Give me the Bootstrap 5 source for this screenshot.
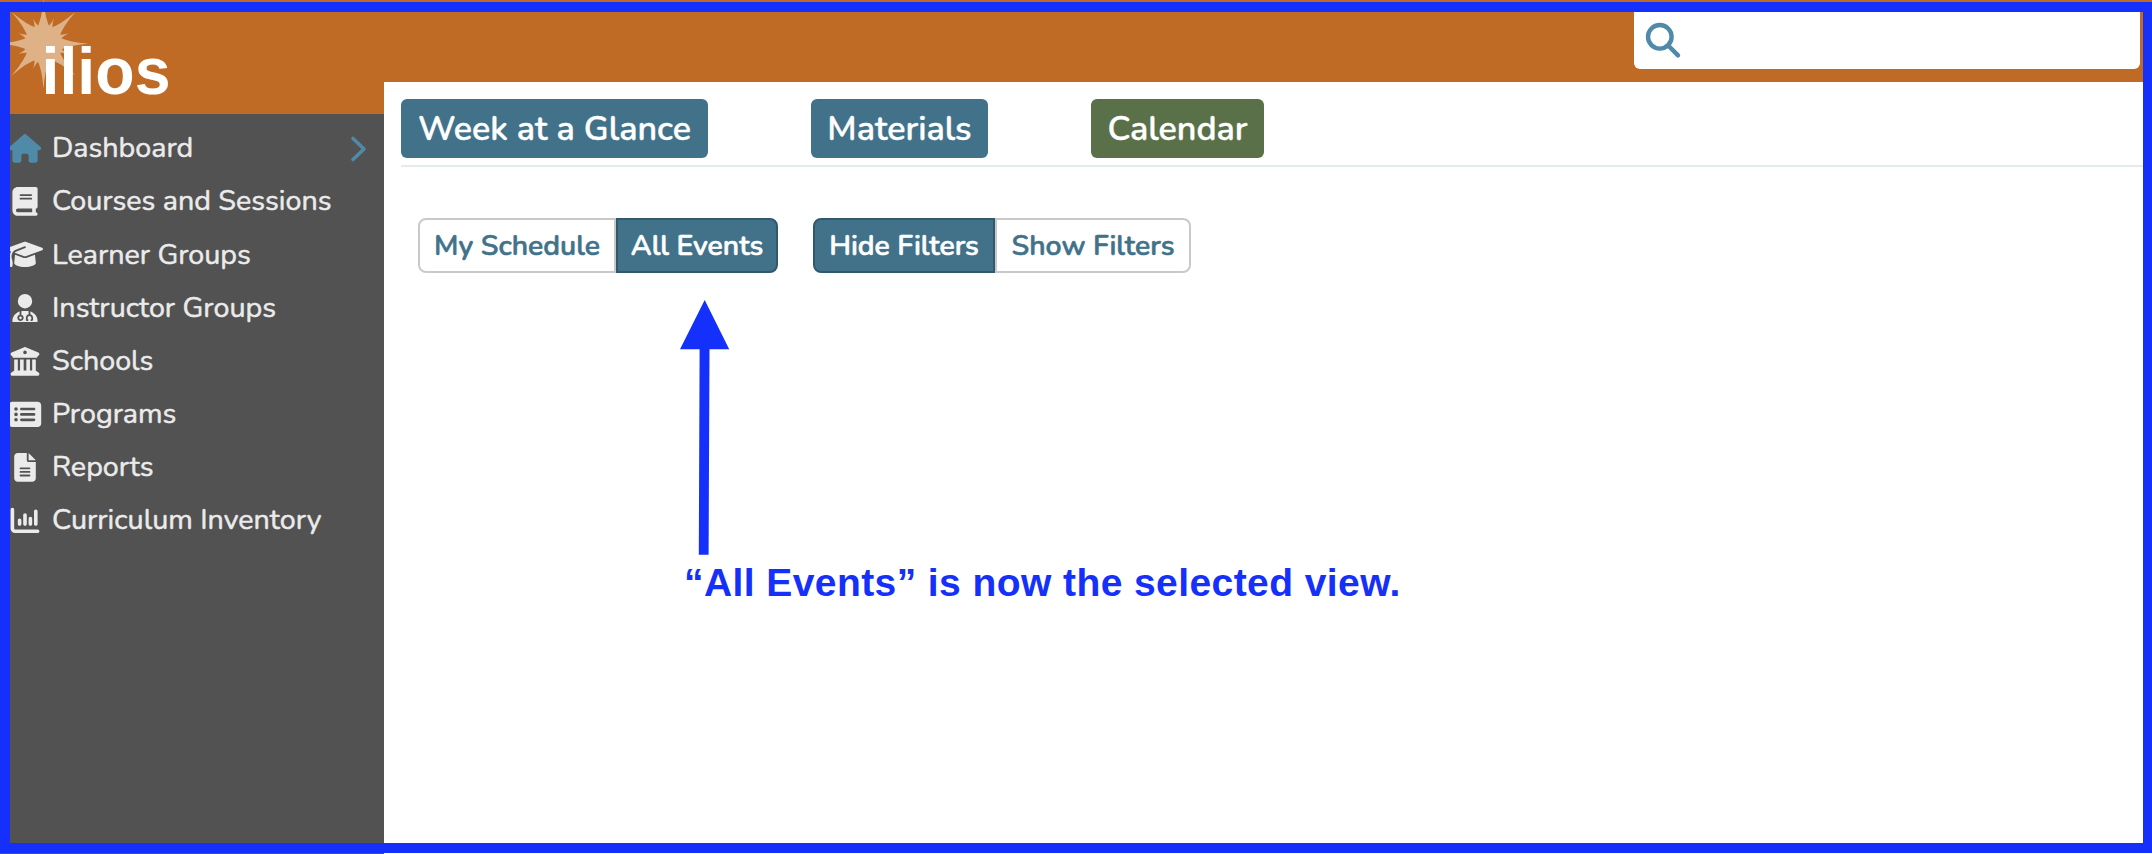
<!DOCTYPE html>
<html lang="en">
<head>
<meta charset="utf-8">
<title>Ilios</title>
<link href="https://cdn.jsdelivr.net/npm/bootstrap@5.3.0/dist/css/bootstrap.min.css" rel="stylesheet">
<style>
  :root { --brand:#bf6b26; --teal:#41728a; --icon-teal:#4f8aa8; --note:#1430fa; }
  body { font-family: Nunito, Lato, sans-serif; font-size:28.7px; background:#fff; }
  .shell { height:854px; }
  .side { width:384px; background:#525252; }
  .side-brand { height:114px; background:var(--brand); }
  .top-strip { height:82px; background:var(--brand); padding:2px 12px 13px 0; }
  .search-box { width:506px; background:#fff; border-radius:0 0 6px 6px; padding:19px 0 0 11px; }
  .side-menu { padding-top:8px; }
  .side-menu .nav-link { height:53.15px; padding:0 16px 0 7px; color:#ebebeb; line-height:1; }
  .side-menu .nav-link svg.ico { width:36px; height:28.8px; fill:currentColor; flex:none; position:static; }
  .side-menu .nav-link span { margin-left:9px; white-space:nowrap; -webkit-text-stroke:.5px; }
  .side-menu .active svg { color:var(--icon-teal); }
  .tabs-row { margin-left:17px; padding:17px 0 7px; gap:103px; border-bottom:2px solid #e5eaeb; }
  .btn-tab { height:59px; border:0; border-radius:6px; padding:0; font-size:34.1px; font-weight:600; line-height:60px; color:#fff; background:var(--teal); white-space:nowrap; -webkit-text-stroke:.4px; }
  .btn-tab.current { background:#5a7049; }
  .toggles { margin:51px 0 0 34px; gap:35px; }
  .btn-flip { height:55px; border:2px solid #c9c9c9; padding:0; font-size:28.4px; font-weight:600; line-height:48px; color:var(--teal); background:#fff; border-radius:8px; white-space:nowrap; -webkit-text-stroke:.6px; }
  .btn-flip.on { color:#fff; background:var(--teal); border-color:#31596e; }
  .toggles .btn-group > .btn-flip:not(:first-child) { margin-left:0; border-left-width:2px; }
  .callout-note { margin:27px 0 0 296px; color:var(--note); font:bold 39px/1 "Liberation Sans", sans-serif; }
  .callout-note p { margin:8px 0 0 4px; white-space:nowrap; letter-spacing:.42px; }
  .frame { inset:2px 0 1px 0; border:solid var(--note); border-width:10px 9px 10px 10px; pointer-events:none; }
</style>
<script src="https://cdn.jsdelivr.net/npm/bootstrap@5.3.0/dist/js/bootstrap.bundle.min.js"></script>
</head>
<body>
<div class="shell d-flex position-relative overflow-hidden">
  <aside class="side flex-shrink-0">
    <div class="side-brand">
      <svg width="384" height="114" class="d-block" role="img" aria-label="ilios">
        <defs>
          <g id="rays">
            <path d="M0-45Q-1.5-24-7-15H7Q1.5-24 0-45Z"/>
            <path transform="rotate(22.5)" d="M0-27Q-.6-19-4.5-15H4.5Q.6-19 0-27Z"/>
          </g>
        </defs>
        <g fill="#deb286" transform="translate(43.5 43.7)">
          <circle r="17"/>
          <use href="#rays"/><use href="#rays" transform="rotate(45)"/><use href="#rays" transform="rotate(90)"/><use href="#rays" transform="rotate(135)"/>
          <use href="#rays" transform="rotate(180)"/><use href="#rays" transform="rotate(225)"/><use href="#rays" transform="rotate(270)"/><use href="#rays" transform="rotate(315)"/>
        </g>
        <text x="41.5" y="94" textLength="129" lengthAdjust="spacingAndGlyphs" font-family="Liberation Sans, sans-serif" font-weight="700" font-size="66" fill="#fff">ilios</text>
      </svg>
    </div>
    <nav class="nav flex-column flex-nowrap side-menu">
      <a class="nav-link active d-flex align-items-center"><svg class="ico" viewBox="0 0 576 512"><path d="M575.8 255.5c0 18-15 32.1-32 32.1h-32l.7 160.2c0 2.7-.2 5.4-.5 8.1V472c0 22.1-17.9 40-40 40H456c-1.1 0-2.2 0-3.3-.1c-1.4 .1-2.8 .1-4.2 .1H416 392c-22.1 0-40-17.9-40-40V448 384c0-17.7-14.3-32-32-32H256c-17.7 0-32 14.3-32 32v64 24c0 22.1-17.9 40-40 40H160 128.1c-1.5 0-3-.1-4.5-.2c-1.2 .1-2.4 .2-3.6 .2H104c-22.1 0-40-17.9-40-40V360c0-.9 0-1.9 .1-2.8V287.6H32c-18 0-32-14-32-32.1c0-9 3-17 10-24L266.4 8c7-7 15-8 22-8s15 2 21 7L564.8 231.5c8 7 12 15 11 24z"/></svg><span>Dashboard</span>
        <svg class="ms-auto" width="18" height="28" viewBox="0 0 18 28" fill="none" stroke="currentColor" stroke-width="3.6" stroke-linecap="round" stroke-linejoin="round"><path d="M3 3.5 14 14 3 24.5"/></svg></a>
      <a class="nav-link d-flex align-items-center"><svg class="ico" viewBox="0 0 448 512"><path d="M96 0C43 0 0 43 0 96V416c0 53 43 96 96 96H384h32c17.7 0 32-14.3 32-32s-14.3-32-32-32V384c17.7 0 32-14.3 32-32V32c0-17.7-14.3-32-32-32H384 96zm0 384H352v64H96c-17.7 0-32-14.3-32-32s14.3-32 32-32zm32-240c0-8.8 7.2-16 16-16H336c8.8 0 16 7.2 16 16s-7.2 16-16 16H144c-8.8 0-16-7.2-16-16zm16 48H336c8.8 0 16 7.2 16 16s-7.2 16-16 16H144c-8.8 0-16-7.2-16-16s7.2-16 16-16z"/></svg><span>Courses and Sessions</span></a>
      <a class="nav-link d-flex align-items-center"><svg class="ico" viewBox="0 0 640 512"><path d="M320 32c-8.1 0-16.1 1.4-23.7 4.1L15.8 137.4C6.3 140.9 0 149.9 0 160s6.3 19.1 15.8 22.6l57.9 20.9C57.3 229.3 48 259.8 48 291.9v28.1c0 28.4-10.8 57.7-22.3 80.8c-6.5 13-13.9 25.8-22.5 37.6C0 442.7-.9 448.3 .9 453.4s6 8.9 11.2 10.2l64 16c4.2 1.1 8.7 .3 12.4-2s6.3-6.1 7.1-10.4c8.6-42.8 4.3-81.2-2.1-108.7C90.3 344.3 86 329.8 80 316.5V291.9c0-30.2 10.2-58.7 27.9-81.5c12.9-15.5 29.6-28 49.2-35.7l157-61.7c8.2-3.2 17.5 .8 20.7 9s-.8 17.5-9 20.7l-157 61.7c-12.4 4.9-23.3 12.4-32.2 21.6l159.6 57.6c7.6 2.7 15.6 4.1 23.7 4.1s16.1-1.4 23.7-4.1L624.2 182.6c9.5-3.4 15.8-12.5 15.8-22.6s-6.3-19.1-15.8-22.6L343.7 36.1C336.1 33.4 328.1 32 320 32zM128 408c0 35.3 86 72 192 72s192-36.7 192-72L496.7 262.6 354.5 314c-11.1 4-22.8 6-34.5 6s-23.5-2-34.5-6L143.3 262.6 128 408z"/></svg><span>Learner Groups</span></a>
      <a class="nav-link d-flex align-items-center"><svg class="ico" viewBox="0 0 448 512"><path d="M224 256a128 128 0 1 0 0-256 128 128 0 1 0 0 256zm-96 55.2C54 332.9 0 401.3 0 482.3C0 498.7 13.3 512 29.7 512H418.3c16.4 0 29.7-13.3 29.7-29.7c0-81-54-149.4-128-171.1V362c27.6 7.1 48 32.2 48 62v40c0 8.8-7.2 16-16 16H336c-8.8 0-16-7.2-16-16s7.2-16 16-16V424c0-17.7-14.3-32-32-32s-32 14.3-32 32v24c8.8 0 16 7.2 16 16s-7.2 16-16 16H256c-8.8 0-16-7.2-16-16V424c0-29.8 20.4-54.9 48-62V304.9c-6-.6-12.1-.9-18.3-.9H178.3c-6.2 0-12.3 .3-18.3 .9v65.4c23.1 6.9 40 28.3 40 53.7c0 30.9-25.1 56-56 56s-56-25.1-56-56c0-25.4 16.9-46.8 40-53.7V311.2zM144 448a24 24 0 1 0 0-48 24 24 0 1 0 0 48z"/></svg><span>Instructor Groups</span></a>
      <a class="nav-link d-flex align-items-center"><svg class="ico" viewBox="0 0 512 512"><path d="M243.4 2.6l-224 96c-14 6-21.8 21-18.7 35.8S16.8 160 32 160v8c0 13.3 10.7 24 24 24H456c13.3 0 24-10.7 24-24v-8c15.2 0 28.3-10.7 31.3-25.6s-4.8-29.9-18.7-35.8l-224-96c-8-3.4-17.2-3.4-25.2 0zM128 224H64V420.3c-.6 .3-1.2 .7-1.8 1.1l-48 32c-11.7 7.8-17 22.4-12.9 35.9S17.9 512 32 512H480c14.1 0 26.5-9.2 30.6-22.7s-1.1-28.1-12.9-35.9l-48-32c-.6-.4-1.2-.7-1.8-1.1V224H384V416H344V224H280V416H232V224H168V416H128V224zM256 64a32 32 0 1 1 0 64 32 32 0 1 1 0-64z"/></svg><span>Schools</span></a>
      <a class="nav-link d-flex align-items-center"><svg class="ico" viewBox="0 0 576 512"><path d="M0 96C0 60.7 28.7 32 64 32H512c35.3 0 64 28.7 64 64V416c0 35.3-28.7 64-64 64H64c-35.3 0-64-28.7-64-64V96zM128 288a32 32 0 1 0 0-64 32 32 0 1 0 0 64zm32-128a32 32 0 1 0 -64 0 32 32 0 1 0 64 0zM128 384a32 32 0 1 0 0-64 32 32 0 1 0 0 64zm96-248c-13.3 0-24 10.7-24 24s10.7 24 24 24H448c13.3 0 24-10.7 24-24s-10.7-24-24-24H224zm0 96c-13.3 0-24 10.7-24 24s10.7 24 24 24H448c13.3 0 24-10.7 24-24s-10.7-24-24-24H224zm0 96c-13.3 0-24 10.7-24 24s10.7 24 24 24H448c13.3 0 24-10.7 24-24s-10.7-24-24-24H224z"/></svg><span>Programs</span></a>
      <a class="nav-link d-flex align-items-center"><svg class="ico" viewBox="0 0 384 512"><path d="M64 0C28.7 0 0 28.7 0 64V448c0 35.3 28.7 64 64 64H320c35.3 0 64-28.7 64-64V160H256c-17.7 0-32-14.3-32-32V0H64zM256 0V128H384L256 0zM112 256H272c8.8 0 16 7.2 16 16s-7.2 16-16 16H112c-8.8 0-16-7.2-16-16s7.2-16 16-16zm0 64H272c8.8 0 16 7.2 16 16s-7.2 16-16 16H112c-8.8 0-16-7.2-16-16s7.2-16 16-16zm0 64H272c8.8 0 16 7.2 16 16s-7.2 16-16 16H112c-8.8 0-16-7.2-16-16s7.2-16 16-16z"/></svg><span>Reports</span></a>
      <a class="nav-link d-flex align-items-center"><svg class="ico" viewBox="0 0 512 512"><path d="M32 32c17.7 0 32 14.3 32 32V400c0 8.8 7.2 16 16 16H480c17.7 0 32 14.3 32 32s-14.3 32-32 32H80c-44.2 0-80-35.8-80-80V64C0 46.3 14.3 32 32 32zM160 224c17.7 0 32 14.3 32 32v64c0 17.7-14.3 32-32 32s-32-14.3-32-32V256c0-17.7 14.3-32 32-32zm128-64V320c0 17.7-14.3 32-32 32s-32-14.3-32-32V160c0-17.7 14.3-32 32-32s32 14.3 32 32zm64 32c17.7 0 32 14.3 32 32v96c0 17.7-14.3 32-32 32s-32-14.3-32-32V224c0-17.7 14.3-32 32-32zM480 96V320c0 17.7-14.3 32-32 32s-32-14.3-32-32V96c0-17.7 14.3-32 32-32s32 14.3 32 32z"/></svg><span>Curriculum Inventory</span></a>
    </nav>
  </aside>
  <main class="flex-grow-1">
    <header class="top-strip d-flex justify-content-end">
      <div class="search-box">
        <svg class="d-block" width="38" height="38" fill="none" stroke="#4f8aa8" stroke-width="4.4" stroke-linecap="round"><circle cx="14.8" cy="15.8" r="11.8"/><path d="M23.2 24.5 33 34.4"/></svg>
      </div>
    </header>
    <div class="tabs-row d-flex">
      <button class="btn btn-tab" style="width:307px">Week at a Glance</button>
      <button class="btn btn-tab" style="width:177px">Materials</button>
      <button class="btn btn-tab current" style="width:173px">Calendar</button>
    </div>
    <div class="toggles d-flex">
      <div class="btn-group">
        <button class="btn btn-flip" style="width:198px">My Schedule</button>
        <button class="btn btn-flip on" style="width:162px">All Events</button>
      </div>
      <div class="btn-group">
        <button class="btn btn-flip on" style="width:182px">Hide Filters</button>
        <button class="btn btn-flip" style="width:196px">Show Filters</button>
      </div>
    </div>
    <div class="callout-note">
      <svg class="d-block" width="50" height="255" fill="#1430fa"><path d="M24.7 0 49.2 49.3H29.5L28.6 254.7H18.8L19.6 49.3H0Z"/></svg>
      <p>“All Events” is now the selected view.</p>
    </div>
  </main>
  <div class="frame position-absolute"></div>
</div>
</body>
</html>
